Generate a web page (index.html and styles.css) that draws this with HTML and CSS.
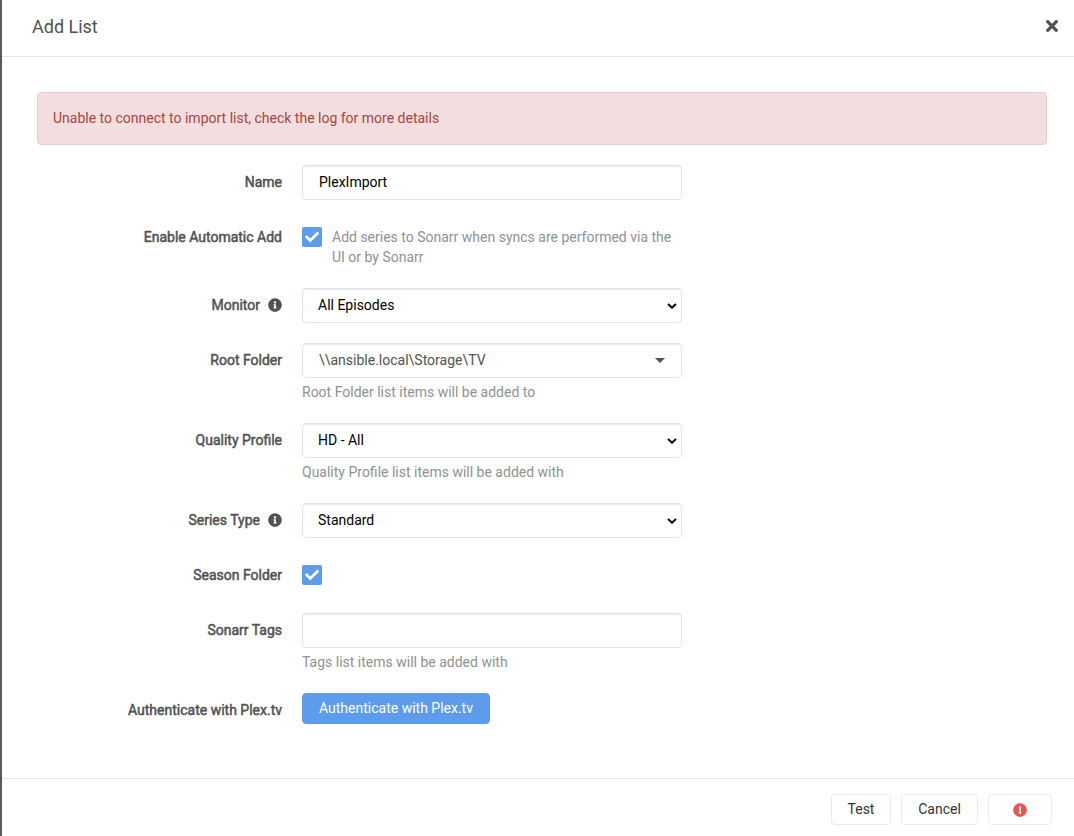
FILE: index.html
```html
<!DOCTYPE html>
<html lang="en">
<head>
<meta charset="utf-8">
<title>Add List</title>
<link rel="stylesheet" href="styles.css">
</head>
<body>
<svg class="defs" width="0" height="0">
  <symbol id="check" viewBox="0 0 512 512"><path d="M173.898 439.404l-166.400-166.400c-9.997-9.997-9.997-26.206 0-36.204l36.203-36.204c9.997-9.998 26.207-9.998 36.204 0L192 312.690 432.095 72.596c9.997-9.997 26.207-9.997 36.204 0l36.203 36.204c9.997 9.997 9.997 26.206 0 36.204l-294.400 294.401c-9.998 9.997-26.207 9.997-36.204-.001z"/></symbol>
  <symbol id="info" viewBox="0 0 512 512"><path d="M256 8C119.043 8 8 119.083 8 256c0 136.997 111.043 248 248 248s248-111.003 248-248C504 119.083 392.957 8 256 8zm0 110c23.196 0 42 18.804 42 42s-18.804 42-42 42-42-18.804-42-42 18.804-42 42-42zm56 254c0 6.627-5.373 12-12 12h-88c-6.627 0-12-5.373-12-12v-24c0-6.627 5.373-12 12-12h12v-64h-12c-6.627 0-12-5.373-12-12v-24c0-6.627 5.373-12 12-12h64c6.627 0 12 5.373 12 12v100h12c6.627 0 12 5.373 12 12v24z"/></symbol>
  <symbol id="chevron" viewBox="0 0 10 6"><path d="M1 1l4 3.700L9 1" fill="none" stroke="#000" stroke-width="2"/></symbol>
</svg>
<div class="modal">
  <header class="header">
    <h1 class="title">Add List</h1>
    <svg class="close" viewBox="0 0 352 512"><path d="M242.720 256l100.070-100.070c12.280-12.280 12.280-32.190 0-44.480l-22.240-22.240c-12.280-12.280-32.190-12.280-44.480 0L176 189.280 75.930 89.210c-12.280-12.280-32.190-12.280-44.480 0L9.210 111.450c-12.280 12.280-12.280 32.190 0 44.480L109.280 256 9.210 356.070c-12.280 12.280-12.280 32.190 0 44.480l22.240 22.240c12.280 12.280 32.200 12.280 44.480 0L176 322.720l100.070 100.070c12.280 12.280 32.200 12.280 44.480 0l22.240-22.240c12.280-12.280 12.280-32.190 0-44.480L242.720 256z"/></svg>
  </header>
  <main class="body">
    <div class="alert"><span>Unable to connect to import list, check the log for more details</span></div>
    <div class="form">
      <div class="group">
        <div class="label"><span>Name</span></div>
        <div class="field"><div class="input dark"><span>PlexImport</span></div></div>
      </div>
      <div class="group">
        <div class="label"><span>Enable Automatic Add</span></div>
        <div class="field check-field">
          <div class="checkbox"><svg><use href="#check"/></svg></div>
          <div class="check-help">Add series to Sonarr when syncs are performed via the UI or by Sonarr</div>
        </div>
      </div>
      <div class="group">
        <div class="label"><span>Monitor</span><svg class="info"><use href="#info"/></svg></div>
        <div class="field"><div class="input select"><span>All Episodes</span><svg class="chevron"><use href="#chevron"/></svg></div></div>
      </div>
      <div class="group">
        <div class="label"><span>Root Folder</span></div>
        <div class="field">
          <div class="input"><span>\\ansible.local\Storage\TV</span><i class="caret"></i></div>
          <div class="help"><span>Root Folder list items will be added to</span></div>
        </div>
      </div>
      <div class="group">
        <div class="label"><span>Quality Profile</span></div>
        <div class="field">
          <div class="input select"><span>HD - All</span><svg class="chevron"><use href="#chevron"/></svg></div>
          <div class="help"><span>Quality Profile list items will be added with</span></div>
        </div>
      </div>
      <div class="group">
        <div class="label"><span>Series Type</span><svg class="info"><use href="#info"/></svg></div>
        <div class="field"><div class="input select"><span>Standard</span><svg class="chevron"><use href="#chevron"/></svg></div></div>
      </div>
      <div class="group">
        <div class="label"><span>Season Folder</span></div>
        <div class="field check-field"><div class="checkbox"><svg><use href="#check"/></svg></div></div>
      </div>
      <div class="group">
        <div class="label"><span>Sonarr Tags</span></div>
        <div class="field">
          <div class="input"></div>
          <div class="help"><span>Tags list items will be added with</span></div>
        </div>
      </div>
      <div class="group">
        <div class="label"><span>Authenticate with Plex.tv</span></div>
        <div class="field"><button class="button primary">Authenticate with Plex.tv</button></div>
      </div>
    </div>
  </main>
  <footer class="footer">
    <button class="button test">Test</button>
    <button class="button cancel">Cancel</button>
    <button class="button save" aria-label="Save">
      <svg class="error" viewBox="0 0 512 512"><path d="M504 256c0 136.997-111.043 248-248 248S8 392.997 8 256C8 119.083 119.043 8 256 8s248 111.083 248 248zm-248 50c-25.405 0-46 20.595-46 46s20.595 46 46 46 46-20.595 46-46-20.595-46-46-46zm-43.673-165.346l7.418 136c.347 6.364 5.609 11.346 11.982 11.346h48.546c6.373 0 11.635-4.982 11.982-11.346l7.418-136c.375-6.874-5.098-12.654-11.982-12.654h-63.383c-6.884 0-12.356 5.780-11.981 12.654z"/></svg>
    </button>
  </footer>
</div>
</body>
</html>
```
FILE: styles.css
```css
* { box-sizing: border-box; }
body {
  margin: 0;
  height: 836px;
  overflow: hidden;
  background: #fff;
  color: #515253;
  font: 14px/20px Roboto, "Open Sans", sans-serif;
}
.defs { position: absolute; }
.modal {
  display: flex;
  flex-direction: column;
  height: 836px;
  border-left: 2px solid #58595a;
}
.header {
  display: flex;
  justify-content: space-between;
  align-items: center;
  height: 57px;
  padding: 0 16px 4px 30px;
  border-bottom: 1px solid #e5e5e5;
}
.title { margin: 0; padding-top: 1px; font-size: 18px; line-height: 26px; font-weight: 400; }
.close { width: 12px; height: 18px; fill: #515253; }
.body { flex: 1; padding: 35px 27px 0 35px; }
.alert {
  height: 53px;
  padding: 15px;
  border: 1px solid #ebccd1;
  border-radius: 4px;
  background: #f2dede;
  color: #a94442;
}
.form { display: flex; flex-direction: column; gap: 20px; padding-top: 20px; }
.group { display: flex; gap: 20px; }
.label {
  display: flex;
  justify-content: flex-end;
  align-items: center;
  width: 245px;
  height: 35px;
  padding-bottom: 1px;
  -webkit-text-stroke: 0.5px #515253;
}
.info { width: 14px; height: 14px; margin-left: 8px; fill: #515253; -webkit-text-stroke: 0; }
.field { width: 380px; }
.input {
  display: flex;
  justify-content: space-between;
  align-items: center;
  height: 35px;
  padding: 0 16px;
  border: 1px solid #dde6e9;
  border-radius: 4px;
  box-shadow: inset 0 1px 1px rgba(0, 0, 0, 0.075);
}
.input span { padding-bottom: 1px; }
.dark { color: #000; }
.select { padding: 0 4px 0 15px; color: #000; }
.chevron { width: 10px; height: 6px; }
.caret {
  border: 5px solid transparent;
  border-top-color: #515253;
  border-bottom: 0;
}
.help { height: 25px; padding-top: 4px; color: #909293; }
.check-field { display: flex; gap: 10px; min-height: 35px; padding-top: 7px; }
.checkbox {
  display: flex;
  justify-content: center;
  align-items: center;
  flex: none;
  width: 20px;
  height: 20px;
  border-radius: 2px;
  background: #5d9cec;
}
.checkbox svg { width: 14px; height: 14px; fill: #fff; }
.check-help { height: 41px; color: #909293; }
.button {
  display: flex;
  justify-content: center;
  align-items: center;
  height: 31px;
  padding: 0 0 1px;
  border: 1px solid #eaeaea;
  border-radius: 4px;
  background: #fff;
  color: #333;
  font: inherit;
}
.primary { width: 188px; border-color: #5d9cec; background: #5d9cec; color: #fff; }
.footer {
  display: flex;
  justify-content: flex-end;
  gap: 10px;
  height: 58px;
  padding: 15px 22px 0 0;
  border-top: 1px solid #e5e5e5;
}
.test { width: 60px; }
.cancel { width: 77px; }
.save { width: 64px; padding-bottom: 0; }
.error { width: 14px; height: 14px; fill: #f05050; }
```
